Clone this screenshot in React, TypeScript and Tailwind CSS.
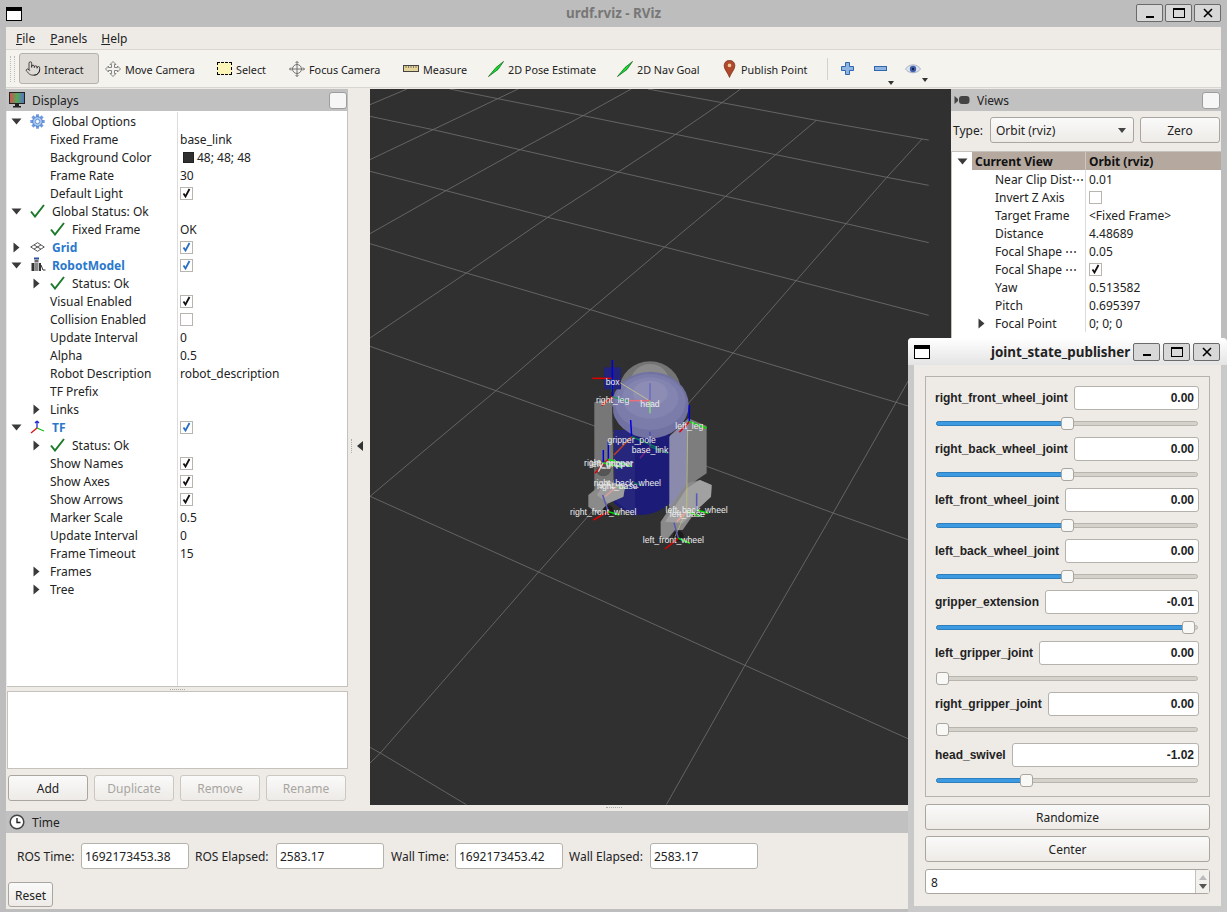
import React from "react";
import { Pointer } from "lucide-react";

type Pt = [number, number];
const z9 = (x: number, y: number): string => `${370 + x / 2.699},${88 + y / 3}`;
const z10 = (x: number, y: number): string => `${370 + x / 2.699},${448 + y / 3}`;
const gridLines: string[] = [
  [z9(215, 3), z9(345, 32), z9(575, 83), z9(825, 139), z9(1095, 200), z9(1395, 268), z9(1508, 292)],
  [z9(750, 3), z9(950, 44), z9(1205, 97), z9(1490, 153), z9(1508, 156)],
  [z9(0, 85), z9(170, 125), z9(405, 185), z9(670, 252), z9(960, 325), z9(1285, 407), z9(1508, 464)],
  [z9(0, 250), z9(205, 308), z9(480, 388), z9(795, 477), z9(1150, 578), z9(1508, 682)],
  [z9(0, 467), z9(260, 555), z9(595, 665), z9(980, 795), z9(1420, 943), z9(1508, 973)],
  [z9(0, 775), z9(340, 908), z10(860, 35), z10(1250, 195), z10(1508, 297)],
  [z10(0, 145), z10(455, 372), z10(1012, 652), z10(1508, 900)],
  [z10(0, 898), z10(28, 915), z10(260, 1070)],
  [z9(0, 50), z9(100, 3)],
  [z9(0, 215), z9(170, 125), z9(345, 32), z9(400, 3)],
  [z9(0, 437), z9(205, 308), z9(405, 185), z9(575, 83), z9(705, 3)],
  [z9(0, 750), z9(260, 555), z9(480, 388), z9(670, 252), z9(825, 139), z9(950, 44), z9(1000, 3)],
  [z10(0, 145), z10(155, 0), z9(340, 908), z9(595, 665), z9(795, 477), z9(960, 325), z9(1095, 200), z9(1205, 97)],
  [z10(0, 945), z10(28, 915), z10(455, 372), z9(980, 795), z9(1150, 578), z9(1285, 407), z9(1395, 268), z9(1490, 153)],
  [z10(800, 1070), z10(1012, 652), z10(1250, 195), z10(1350, 0), z9(1420, 943), z9(1508, 770)],
].map((a) => a.join(" "));

type Axis = { o: Pt; r?: Pt; g?: Pt; b?: Pt; rc?: string; gc?: string; bc?: string };
const axes: Axis[] = [
  { o: [217, 115], r: [157, 115], g: [217, 155], b: [217, 60] },
  { o: [217, 170], r: [185, 197], g: [268, 185], b: [217, 105], gc: "#2d8f6e" },
  { o: [330, 182], r: [268, 182], g: [330, 220], b: [330, 130], rc: "#e8707a", gc: "#7fd67f", bc: "#6b6bc0" },
  { o: [448, 245], r: [418, 277], g: [500, 265], b: [448, 195] },
  { o: [275, 290], r: [222, 345], g: [350, 322], b: [272, 240], rc: "#c04020", gc: "#0d7a50" },
  { o: [330, 320], r: [300, 355], g: [385, 340], b: [330, 275], rc: "#70208a", gc: "#0f6a60", bc: "#5050b0" },
  { o: [205, 358], r: [165, 400], g: [275, 380], b: [205, 305] },
  { o: [190, 368], r: [175, 395], g: [245, 382], b: [190, 330], rc: "#d0d0d0" },
  { o: [280, 428], g: [310, 437], gc: "#0f6a60" },
  { o: [230, 440], r: [195, 470], g: [260, 445], rc: "#d9a0a0", gc: "#8fbf8f" },
  { o: [205, 515], r: [160, 540], g: [238, 525], b: [188, 465], bc: "#5858b8" },
  { o: [470, 510], g: [505, 520], b: [470, 460], bc: "#5858b8" },
  { o: [440, 515], r: [410, 545], g: [485, 530], rc: "#e8a0a0" },
  { o: [415, 595], r: [375, 627], g: [450, 610], b: [402, 548], bc: "#5858b8" },
];
const labels: [string, number, number][] = [
  ["box", 218, 135],
  ["right_leg", 218, 188],
  ["head", 330, 200],
  ["left_leg", 448, 267],
  ["gripper_pole", 275, 310],
  ["base_link", 330, 340],
  ["right_gripper", 205, 378],
  ["left_gripper", 215, 380],
  ["right_back_wheel", 262, 439],
  ["right_base", 232, 447],
  ["right_front_wheel", 190, 524],
  ["left_back_wheel", 470, 518],
  ["left_base", 442, 530],
  ["left_front_wheel", 400, 609],
];

function Scene() {
  return (
    <svg className="block w-full h-full" viewBox="370 89 581 716">
      <rect x="370" y="89" width="581" height="716" fill="#303030" />
      {gridLines.map((p, i) => (
        <polyline key={i} points={p} fill="none" stroke="#717171" strokeWidth="0.8" />
      ))}
      <g transform="translate(540 340) scale(0.3333)">
        <polygon points="163,187 215,175 225,455 163,468" fill="#777" />
        <polygon points="387,290 445,235 500,258 500,400 440,440 387,500" fill="#7d7d7d" />
        <ellipse cx="330" cy="150" rx="92" ry="86" fill="#747474" />
        <ellipse cx="330" cy="122" rx="56" ry="50" fill="#8a8a8a" />
        <path d="M222 270 H390 V490 Q305 560 222 490 Z" fill="#1c1c78" />
        <polygon points="222,270 285,270 285,530 222,480" fill="#26267c" />
        <polygon points="388,290 445,240 440,500 388,515" fill="#8a8aac" />
        <polygon points="145,465 200,420 255,440 250,470 205,490 175,522 145,500" fill="#8a8a8a" />
        <polygon points="200,420 255,440 250,470 205,490 170,465" fill="#a0a0a0" opacity="0.85" />
        <polygon points="440,430 480,420 515,435 513,470 470,510 428,570 405,570 380,600 362,590 362,545" fill="#8a8a8a" />
        <polygon points="440,445 480,420 515,435 513,470 470,510 428,550 375,545" fill="#a6a6a6" opacity="0.8" />
        <ellipse cx="331" cy="195" rx="115" ry="100" fill="#7272a2" />
        <ellipse cx="331" cy="186" rx="106" ry="84" fill="#7c7cab" />
        <ellipse cx="331" cy="174" rx="84" ry="62" fill="#8484b0" />
        <ellipse cx="331" cy="160" rx="52" ry="38" fill="#8c8cb5" />
        <rect x="192" y="82" width="51" height="66" fill="#23237a" />
        <circle cx="190" cy="385" r="24" fill="#555" />
        <circle cx="205" cy="512" r="16" fill="#1c1c1c" />
        <circle cx="415" cy="588" r="16" fill="#1c1c1c" />
        <polyline points="240,128 325,180" stroke="#d8d880" strokeWidth="2" fill="none" />
        <polyline points="443,270 440,510 405,590" stroke="#c8c870" strokeWidth="2" fill="none" />
        <polyline points="218,200 222,420" stroke="#3a3a3a" strokeWidth="3" fill="none" />
        {axes.map((a, i) => (
          <g key={i} strokeWidth="4.5">
            {a.b && <line x1={a.o[0]} y1={a.o[1]} x2={a.b[0]} y2={a.b[1]} stroke={a.bc ?? "#0000e0"} />}
            {a.r && <line x1={a.o[0]} y1={a.o[1]} x2={a.r[0]} y2={a.r[1]} stroke={a.rc ?? "#e00000"} />}
            {a.g && <line x1={a.o[0]} y1={a.o[1]} x2={a.g[0]} y2={a.g[1]} stroke={a.gc ?? "#00e000"} />}
          </g>
        ))}
        {labels.map(([t, x, y]) => (
          <text key={t} x={x} y={y} textAnchor="middle" fontSize="26" fill="#eeeeee" fontFamily="'Liberation Sans', sans-serif">
            {t}
          </text>
        ))}
      </g>
    </svg>
  );
}

function Arrow({ dir }: { dir: "down" | "right" }) {
  return dir === "down" ? (
    <svg width="11" height="7" viewBox="0 0 11 7"><path d="M0.5 0.5 H10.5 L5.5 6.5 Z" fill="#3a3a3a" /></svg>
  ) : (
    <svg width="7" height="11" viewBox="0 0 7 11"><path d="M0.5 0.5 V10.5 L6.5 5.5 Z" fill="#3a3a3a" /></svg>
  );
}

function Check() {
  return (
    <svg width="15" height="14" viewBox="0 0 15 14">
      <path d="M1 7.5 L5 12.5 L14 1" fill="none" stroke="#1d7a2b" strokeWidth="2" />
    </svg>
  );
}

function Gear() {
  const teeth = [0, 45, 90, 135, 180, 225, 270, 315];
  return (
    <svg width="15" height="15" viewBox="0 0 15 15">
      {teeth.map((t) => (
        <rect key={t} x="6" y="0.3" width="3" height="3.4" fill="#6f9be0" transform={`rotate(${t} 7.5 7.5)`} />
      ))}
      <circle cx="7.5" cy="7.5" r="4.8" fill="#a9c6ef" stroke="#4f82d0" />
      <circle cx="7.5" cy="7.5" r="2.2" fill="#f2f6fd" stroke="#4f82d0" strokeWidth="0.8" />
    </svg>
  );
}

function GridIcon() {
  return (
    <svg width="15" height="10" viewBox="0 0 15 10" fill="none" stroke="#444" strokeWidth="0.9">
      <path d="M0.7 5 L7.5 0.7 L14.3 5 L7.5 9.3 Z" />
      <path d="M4 2.9 L10.9 7.1 M11 2.9 L4 7.1" />
    </svg>
  );
}

function RobotIcon() {
  return (
    <svg width="16" height="16" viewBox="0 0 16 16">
      <rect x="4" y="0.5" width="5" height="2" fill="#2c4f9a" />
      <rect x="4.5" y="3" width="4" height="2.5" fill="#666" />
      <rect x="1.5" y="6" width="3" height="8" fill="#333" />
      <rect x="5" y="6" width="3.5" height="8" fill="#888" />
      <rect x="9" y="6" width="2" height="8" fill="#333" />
      <path d="M11 8 L13 13 L15.5 13" stroke="#333" fill="none" />
    </svg>
  );
}

function TfIcon() {
  return (
    <svg width="16" height="16" viewBox="0 0 16 16" fill="none" strokeWidth="1.3">
      <path d="M7 9 L7 2 M7 2 L9 4 M7 2 L5 4" stroke="#2030d0" />
      <path d="M7 9 L1 14" stroke="#e01010" />
      <path d="M7 9 L14 12" stroke="#10c010" />
    </svg>
  );
}

function Box({ on, blue }: { on?: boolean; blue?: boolean }) {
  return (
    <span className="flex items-center justify-center w-[13px] h-[13px] bg-white border border-[#b8b4ae]">
      {on && (
        <svg width="9" height="10" viewBox="0 0 9 10">
          <path d="M1.5 5.5 L3.5 8.5 L7.5 1" fill="none" stroke={blue ? "#2a6fc0" : "#111"} strokeWidth="1.8" />
        </svg>
      )}
    </span>
  );
}

type Row = {
  name: string;
  val?: string;
  box?: "on" | "off" | "blue";
  lvl?: 0 | 1 | 2;
  arrow?: "down" | "right";
  icon?: React.ReactNode;
  bold?: boolean;
  swatch?: boolean;
};

const displayRows: Row[] = [
  { name: "Global Options", lvl: 0, arrow: "down", icon: <Gear /> },
  { name: "Fixed Frame", val: "base_link" },
  { name: "Background Color", val: "48; 48; 48", swatch: true },
  { name: "Frame Rate", val: "30" },
  { name: "Default Light", box: "on" },
  { name: "Global Status: Ok", lvl: 0, arrow: "down", icon: <Check /> },
  { name: "Fixed Frame", val: "OK", lvl: 2, icon: <Check /> },
  { name: "Grid", lvl: 0, arrow: "right", icon: <GridIcon />, bold: true, box: "blue" },
  { name: "RobotModel", lvl: 0, arrow: "down", icon: <RobotIcon />, bold: true, box: "blue" },
  { name: "Status: Ok", lvl: 2, arrow: "right", icon: <Check /> },
  { name: "Visual Enabled", box: "on" },
  { name: "Collision Enabled", box: "off" },
  { name: "Update Interval", val: "0" },
  { name: "Alpha", val: "0.5" },
  { name: "Robot Description", val: "robot_description" },
  { name: "TF Prefix" },
  { name: "Links", arrow: "right" },
  { name: "TF", lvl: 0, arrow: "down", icon: <TfIcon />, bold: true, box: "blue" },
  { name: "Status: Ok", lvl: 2, arrow: "right", icon: <Check /> },
  { name: "Show Names", box: "on" },
  { name: "Show Axes", box: "on" },
  { name: "Show Arrows", box: "on" },
  { name: "Marker Scale", val: "0.5" },
  { name: "Update Interval", val: "0" },
  { name: "Frame Timeout", val: "15" },
  { name: "Frames", arrow: "right" },
  { name: "Tree", arrow: "right" },
];

function TreeRow({ r }: { r: Row }) {
  const lvl = r.lvl ?? 1;
  return (
    <div className="flex h-[18px] items-center">
      <div className="flex items-center w-[171px] h-full shrink-0 border-r border-[#dcdcdc]">
        {lvl === 0 ? (
          <>
            <span className="w-[14px] ml-[2px] flex justify-center shrink-0">{r.arrow && <Arrow dir={r.arrow} />}</span>
            <span className="w-[29px] flex justify-center shrink-0">{r.icon}</span>
          </>
        ) : (
          <>
            <span className="w-[14px] ml-[22px] flex justify-center shrink-0">{r.arrow && <Arrow dir={r.arrow} />}</span>
            {lvl === 2 ? <span className="w-[29px] flex justify-center shrink-0">{r.icon}</span> : <span className="w-[7px] shrink-0" />}
          </>
        )}
        <span className={`pt-[2px] ${r.bold ? "font-bold text-[#2a78cc]" : "text-[#222]"}`}>{r.name}</span>
      </div>
      <div className="flex items-center pl-[2px] text-[#222]">
        {r.swatch && <span className="w-[11px] h-[11px] bg-[#303030] border border-[#222] ml-[3px] mr-[3px]" />}
        {r.val && <span className="pt-[2px]">{r.val}</span>}
        {r.box && <Box on={r.box !== "off"} blue={r.box === "blue"} />}
      </div>
    </div>
  );
}

function FloatBtn() {
  return <span className="w-[18px] h-[17px] rounded-[3px] bg-[#f6f6f6] border border-[#9d9d9d]" />;
}

function DockTitle({ icon, text }: { icon: React.ReactNode; text: string }) {
  return (
    <div className="flex items-center h-[22px] bg-[#c1c1c1] pr-[1px] text-[#222] shrink-0">
      <span className="w-[26px] pl-[3px] flex items-center shrink-0">{icon}</span>
      <span className="flex-1 pt-[2px]">{text}</span>
      <FloatBtn />
    </div>
  );
}

function Btn({ children, disabled, cls }: { children: React.ReactNode; disabled?: boolean; cls: string }) {
  return (
    <div
      className={`flex items-center justify-center pt-[2px] rounded-[3px] border bg-gradient-to-b from-[#fafafa] to-[#eeebe7] ${
        disabled ? "text-[#a8a5a0] border-[#cbc7c1]" : "text-[#222] border-[#aaa69f]"
      } ${cls}`}
    >
      {children}
    </div>
  );
}

function Tool({ w, icon, text, active }: { w: string; icon: React.ReactNode; text: string; active?: boolean }) {
  return (
    <div className={`flex items-center h-[31px] pl-[5px] shrink-0 rounded-[3px] ${w} ${active ? "bg-[#dedbd6] border border-[#b5b1ab] pl-[4px]" : ""}`}>
      <span className={`w-[16px] h-[18px] flex items-center justify-center shrink-0 ${active ? "mr-[3px]" : "mr-[4px]"}`}>{icon}</span>
      <span className="pt-[4px] text-[10.8px] text-[#222]">{text}</span>
    </div>
  );
}

function PoseIcon() {
  return (
    <svg width="16" height="16" viewBox="0 0 16 16">
      <path d="M0.5 15.5 L8 6.5 L15.5 0.5 L10 8.5 Z" fill="#12e02c" stroke="#0b5a14" strokeWidth="0.7" />
    </svg>
  );
}

function WinBtns({ gap }: { gap: string }) {
  const cls = "w-[27px] h-[18px] flex items-center justify-center rounded-[2px] border border-[#6a6a6a] bg-[#d8d8d8]";
  return (
    <div className={`flex ${gap}`}>
      <div className={cls}><span className="w-[8px] h-[2px] bg-black mt-[7px]" /></div>
      <div className={cls}><span className="w-[12px] h-[10px] border border-black border-t-2" /></div>
      <div className={cls}>
        <svg width="10" height="10" viewBox="0 0 10 10"><path d="M1 1 L9 9 M9 1 L1 9" stroke="#000" strokeWidth="1.6" /></svg>
      </div>
    </div>
  );
}

function WinIcon({ w }: { w: string }) {
  return <span className={`block h-[14px] bg-white border border-black border-t-[4px] shrink-0 ${w}`} />;
}

function Field({ label, value, lw }: { label: string; value: string; lw: string }) {
  return (
    <>
      <span className={`text-[#222] pt-[2px] shrink-0 ${lw}`}>{label}</span>
      <span className="flex items-center w-[108px] h-[26px] bg-white border border-[#b5b1ab] rounded-[3px] pl-[3px] pt-[2px] text-[#222] shrink-0">{value}</span>
    </>
  );
}

const joints: { name: string; val: string; pos: number }[] = [
  { name: "right_front_wheel_joint", val: "0.00", pos: 131 },
  { name: "right_back_wheel_joint", val: "0.00", pos: 131 },
  { name: "left_front_wheel_joint", val: "0.00", pos: 131 },
  { name: "left_back_wheel_joint", val: "0.00", pos: 131 },
  { name: "gripper_extension", val: "-0.01", pos: 252 },
  { name: "left_gripper_joint", val: "0.00", pos: 6 },
  { name: "right_gripper_joint", val: "0.00", pos: 6 },
  { name: "head_swivel", val: "-1.02", pos: 90 },
];

function Joint({ j }: { j: { name: string; val: string; pos: number } }) {
  return (
    <div className="flex flex-col h-[51px] shrink-0">
      <div className="flex items-center h-[24px] gap-[6px] font-['Liberation_Sans',sans-serif] font-bold text-[12px] text-[#222]">
        <span className="shrink-0">{j.name}</span>
        <span className="flex-1 h-[24px] flex items-center justify-end pr-[4px] bg-white border border-[#b5b1ab] rounded-[3px]">{j.val}</span>
      </div>
      <div className="relative h-[13px] mt-[7px] ml-[1px] mr-[1px] flex items-center">
        <div className="w-full h-[5px] rounded-[3px] bg-[#d5d1cb] border border-[#b8b4ae]" />
        <div className="absolute left-0 h-[5px] rounded-l-[3px] bg-[#3b9ae1] border border-[#2f7fbd]" style={{ width: j.pos }} />
        <div className="absolute w-[13px] h-[13px] rounded-[3px] bg-[#f8f8f6] border border-[#aaa69f]" style={{ left: j.pos - 6 }} />
      </div>
    </div>
  );
}

export default function App() {
  return (
    <div className="relative w-[1227px] h-[912px] overflow-hidden bg-[#bdbdbd] font-['Noto_Sans',sans-serif] text-[12px] leading-none">
      {/* title bar */}
      <div className="relative flex items-center justify-between h-[27px] pl-[6px] pr-[6px]">
        <WinIcon w="w-[16px]" />
        <span className="absolute left-[566px] top-[7px] font-bold text-[13.4px] text-[#777] leading-[13px]">urdf.rviz - RViz</span>
        <div className="-mt-[1px]"><WinBtns gap="gap-[2px]" /></div>
      </div>

      <div className="flex flex-col mx-[6px] h-[882px] bg-[#eeebe7]">
        {/* menu */}
        <div className="flex items-center h-[22px] pl-[10px] pt-[2px] gap-[15px] text-[#222] shrink-0">
          <span><span className="underline">F</span>ile</span>
          <span><span className="underline">P</span>anels</span>
          <span className="-ml-[1px]"><span className="underline">H</span>elp</span>
        </div>
        {/* toolbar */}
        <div className="flex items-center h-[39px] bg-[#f5f3ee] border-y border-[#d9d6d0] shrink-0 pl-[4px]">
          <span className="w-[5px] h-[26px] mr-[4px] border-x border-dotted border-[#bcbcbc] shrink-0" />
          <Tool w="w-[80px]" active text="Interact" icon={<Pointer size={17} strokeWidth={1.1} color="#111" />} />
          <span className="w-[1px] shrink-0" />
          <Tool
            w="w-[111px]"
            text="Move Camera"
            icon={
              <svg width="16" height="16" viewBox="0 0 16 16">
                <path
                  d="M8 0.5 L11 3.5 H9.5 V6.5 H12.5 V5 L15.5 8 L12.5 11 V9.5 H9.5 V12.5 H11 L8 15.5 L5 12.5 H6.5 V9.5 H3.5 V11 L0.5 8 L3.5 5 V6.5 H6.5 V3.5 H5 Z"
                  fill="#f2f0ec"
                  stroke="#777"
                  strokeWidth="0.9"
                />
              </svg>
            }
          />
          <Tool w="w-[73px]" text="Select" icon={<span className="block w-[15px] h-[13px] bg-[#fbf5b8] border border-dashed border-black" />} />
          <Tool
            w="w-[114px]"
            text="Focus Camera"
            icon={
              <svg width="16" height="16" viewBox="0 0 16 16" fill="none" stroke="#666" strokeWidth="0.9">
                <circle cx="8" cy="8" r="4.5" />
                <path d="M8 0.5 V15.5 M0.5 8 H15.5 M6.5 2 L8 0.5 L9.5 2 M6.5 14 L8 15.5 L9.5 14 M2 6.5 L0.5 8 L2 9.5 M14 6.5 L15.5 8 L14 9.5" />
              </svg>
            }
          />
          <Tool
            w="w-[85px]"
            text="Measure"
            icon={
              <svg width="16" height="8" viewBox="0 0 16 8">
                <rect x="0.5" y="0.5" width="15" height="6" fill="#e6d59a" stroke="#444" />
                <path d="M3 1 V3 M5.5 1 V3 M8 1 V3 M10.5 1 V3 M13 1 V3" stroke="#555" strokeWidth="0.7" />
              </svg>
            }
          />
          <Tool w="w-[129px]" text="2D Pose Estimate" icon={<PoseIcon />} />
          <Tool w="w-[104px]" text="2D Nav Goal" icon={<PoseIcon />} />
          <Tool
            w="w-[111px]"
            text="Publish Point"
            icon={
              <svg width="13" height="18" viewBox="0 0 11 16">
                <path d="M5.5 15.5 C4 11 0.7 8.5 0.7 5 A4.8 4.8 0 0 1 10.3 5 C10.3 8.5 7 11 5.5 15.5 Z" fill="#b0482a" stroke="#6d3018" strokeWidth="0.6" />
                <circle cx="5.5" cy="4.8" r="1.6" fill="#f0c8a0" />
              </svg>
            }
          />
          <span className="w-[1px] h-[22px] bg-[#d5d2cc] shrink-0" />
          <div className="flex items-center justify-center w-[38px] shrink-0">
            <svg width="13" height="13" viewBox="0 0 13 13">
              <path d="M4.5 0.5 H8.5 V4.5 H12.5 V8.5 H8.5 V12.5 H4.5 V8.5 H0.5 V4.5 H4.5 Z" fill="#8fb4e2" stroke="#2f66ad" />
            </svg>
          </div>
          <div className="relative flex items-center justify-center w-[28px] shrink-0">
            <span className="block w-[13px] h-[5px] bg-[#8fb4e2] border border-[#2f66ad]" />
            <svg className="absolute right-[0px] top-[15px]" width="6" height="4" viewBox="0 0 6 4"><path d="M0 0 H6 L3 4 Z" fill="#333" /></svg>
          </div>
          <div className="relative flex items-center justify-center w-[38px] shrink-0">
            <svg width="16" height="12" viewBox="0 0 16 12">
              <path d="M0.5 6 C4 0.5 12 0.5 15.5 6 C12 11 4 11 0.5 6 Z" fill="#dfe4ee" stroke="#a9b2c4" />
              <circle cx="8" cy="6" r="3.2" fill="#3f5fa8" />
              <circle cx="8" cy="6" r="1.2" fill="#10204a" />
            </svg>
            <svg className="absolute right-[4px] top-[15px]" width="6" height="4" viewBox="0 0 6 4"><path d="M0 0 H6 L3 4 Z" fill="#333" /></svg>
          </div>
        </div>

        {/* main */}
        <div className="flex h-[717px] pt-[1px] shrink-0">
          {/* displays */}
          <div className="flex flex-col w-[342px] shrink-0">
            <DockTitle
              text="Displays"
              icon={
                <svg width="16" height="16" viewBox="0 0 16 16">
                  <defs>
                    <linearGradient id="mon" x1="0" x2="1" y1="0" y2="0">
                      <stop offset="0" stopColor="#d35050" />
                      <stop offset="0.5" stopColor="#58a858" />
                      <stop offset="1" stopColor="#5870c8" />
                    </linearGradient>
                  </defs>
                  <rect x="0.5" y="0.5" width="15" height="11" fill="url(#mon)" stroke="#222" />
                  <rect x="6" y="12" width="4" height="2" fill="#222" />
                  <rect x="4" y="14" width="8" height="1.5" fill="#222" />
                </svg>
              }
            />
            <div className="w-[341px] h-[576px] bg-white ml-[1px] border-r border-b border-[#c5c1bb] overflow-hidden shrink-0">
              <div className="pt-[1px]">
                {displayRows.map((r, i) => (
                  <TreeRow key={i} r={r} />
                ))}
              </div>
              <div className="ml-[170px] h-[200px] w-[1px] bg-[#dcdcdc]" />
            </div>
            <div className="flex items-center justify-center h-[4px] shrink-0">
              <span className="w-[15px] h-[1px] border-t border-dotted border-[#aaa]" />
            </div>
            <div className="w-[341px] h-[78px] ml-[1px] bg-white border border-[#c5c1bb] shrink-0" />
            <div className="flex gap-[6px] ml-[2px] mt-[6px]">
              <Btn cls="w-[80px] h-[26px]">Add</Btn>
              <Btn disabled cls="w-[80px] h-[26px]">Duplicate</Btn>
              <Btn disabled cls="w-[80px] h-[26px]">Remove</Btn>
              <Btn disabled cls="w-[80px] h-[26px]">Rename</Btn>
            </div>
          </div>

          {/* splitter */}
          <div className="flex items-center w-[22px] shrink-0 pl-[3px] pb-[2px] gap-[5px]">
            <span className="w-[1px] h-[14px] border-l border-dotted border-[#aaa]" />
            <svg width="6" height="10" viewBox="0 0 6 10"><path d="M6 0 V10 L0 5 Z" fill="#333" /></svg>
          </div>

          {/* viewport */}
          <div className="w-[581px] h-[716px] shrink-0">
            <Scene />
          </div>

          {/* views */}
          <div className="flex flex-col w-[270px] shrink-0 overflow-hidden">
            <DockTitle
              text="Views"
              icon={
                <svg width="16" height="10" viewBox="0 0 16 10">
                  <path d="M0.5 1 L4 4 V6 L0.5 9 Z" fill="#444" />
                  <rect x="5" y="1" width="10.5" height="8" rx="3" fill="#444" />
                </svg>
              }
            />
            <div className="flex items-center h-[26px] mt-[6px] text-[#222] shrink-0">
              <span className="w-[39px] pl-[2px] pt-[2px] shrink-0">Type:</span>
              <div className="flex items-center justify-between w-[144px] h-[26px] pl-[5px] pr-[7px] rounded-[3px] border border-[#aaa69f] bg-gradient-to-b from-[#fafafa] to-[#eeebe7] shrink-0">
                <span className="pt-[2px]">Orbit (rviz)</span>
                <svg width="8" height="5" viewBox="0 0 8 5"><path d="M0 0 H8 L4 5 Z" fill="#444" /></svg>
              </div>
              <Btn cls="w-[80px] h-[26px] ml-[6px]">Zero</Btn>
            </div>
            <div className="mt-[8px] h-[600px] bg-white border-t border-l border-[#c5c1bb] shrink-0">
              <div className="flex h-[18px] items-center font-bold text-[#111]">
                <span className="w-[20px] flex justify-center shrink-0"><Arrow dir="down" /></span>
                <div className="flex items-center w-[114px] h-full pl-[3px] pt-[2px] bg-[#b5a99f] border-r border-[#d0c8c0] shrink-0">Current View</div>
                <div className="flex items-center flex-1 h-full pl-[3px] pt-[2px] bg-[#b5a99f]">Orbit (rviz)</div>
              </div>
              {[
                { n: "Near Clip Dist\u22EF", v: "0.01" },
                { n: "Invert Z Axis", b: "off" },
                { n: "Target Frame", v: "<Fixed Frame>" },
                { n: "Distance", v: "4.48689" },
                { n: "Focal Shape \u22EF", v: "0.05" },
                { n: "Focal Shape \u22EF", b: "on" },
                { n: "Yaw", v: "0.513582" },
                { n: "Pitch", v: "0.695397" },
                { n: "Focal Point", v: "0; 0; 0", a: true },
              ].map((r, i) => (
                <div key={i} className="flex h-[18px] items-center text-[#222]">
                  <div className="flex items-center w-[134px] h-full border-r border-[#dcdcdc] shrink-0">
                    <span className="w-[7px] ml-[26px] mr-[10px] flex justify-center shrink-0">{r.a && <Arrow dir="right" />}</span>
                    <span className="pt-[2px]">{r.n}</span>
                  </div>
                  <div className="flex items-center pl-[3px]">
                    {r.v && <span className="pt-[2px]">{r.v}</span>}
                    {r.b && <Box on={r.b === "on"} />}
                  </div>
                </div>
              ))}
            </div>
          </div>
        </div>

        {/* splitter dots */}
        <div className="h-[6px] shrink-0 pl-[600px] pt-[2px]">
          <div className="w-[16px] h-[1px] border-t border-dotted border-[#aaa]" />
        </div>

        {/* time */}
        <div className="flex flex-col shrink-0">
          <div className="flex items-center h-[22px] bg-[#c1c1c1] text-[#222]">
            <span className="w-[26px] pl-[3px] flex items-center shrink-0">
              <svg width="16" height="16" viewBox="0 0 16 16" fill="none">
                <circle cx="8" cy="8" r="6.8" fill="#fff" stroke="#444" strokeWidth="1.5" />
                <path d="M8 4 V8.5 H11.5" stroke="#222" strokeWidth="1.4" />
              </svg>
            </span>
            <span className="pt-[2px]">Time</span>
          </div>
          <div className="flex items-center h-[26px] mt-[10px] pl-[11px]">
            <Field label="ROS Time:" value="1692173453.38" lw="w-[64px]" />
            <span className="w-[6px]" />
            <Field label="ROS Elapsed:" value="2583.17" lw="w-[81px]" />
            <span className="w-[7px]" />
            <Field label="Wall Time:" value="1692173453.42" lw="w-[64px]" />
            <span className="w-[6px]" />
            <Field label="Wall Elapsed:" value="2583.17" lw="w-[81px]" />
          </div>
          <div className="mt-[13px] ml-[2px]">
            <Btn cls="w-[45px] h-[25px]">Reset</Btn>
          </div>
        </div>
      </div>

      {/* joint_state_publisher floating window */}
      <div className="absolute left-[908px] top-[338px] w-[319px] h-[574px] flex flex-col rounded-t-[4px] bg-[#c9c9c9] overflow-hidden">
        <div className="relative flex items-center h-[27px] pl-[6px] pr-[7px] bg-gradient-to-b from-white to-[#e4e4e4] shrink-0">
          <WinIcon w="w-[16px]" />
          <span className="absolute left-[83px] top-[7px] font-bold text-[13.4px] leading-[14px] text-[#222]">joint_state_publisher</span>
          <div className="ml-auto"><WinBtns gap="gap-[3px]" /></div>
        </div>
        <div className="flex flex-col mx-[6px] h-[541px] bg-[#eeebe7] px-[11px] pt-[11px]">
          <div className="flex flex-col h-[421px] border border-[#b5b2ad] pl-[9px] pr-[10px] pt-[9px] shrink-0">
            {joints.map((j) => (
              <Joint key={j.name} j={j} />
            ))}
          </div>
          <Btn cls="h-[26px] mt-[7px] shrink-0">Randomize</Btn>
          <Btn cls="h-[26px] mt-[6px] shrink-0">Center</Btn>
          <div className="flex items-center h-[25px] mt-[7px] bg-white border border-[#aaa69f] rounded-[3px] pl-[5px] text-[#222] shrink-0">
            <span className="flex-1 pt-[2px]">8</span>
            <span className="flex flex-col items-center justify-center gap-[4px] w-[14px] h-full border-l border-[#c5c1bb] bg-[#f3f1ed]">
              <svg width="8" height="5" viewBox="0 0 8 5"><path d="M4 0 L8 5 H0 Z" fill="#bbb" /></svg>
              <svg width="8" height="5" viewBox="0 0 8 5"><path d="M0 0 H8 L4 5 Z" fill="#555" /></svg>
            </span>
          </div>
        </div>
      </div>
    </div>
  );
}
